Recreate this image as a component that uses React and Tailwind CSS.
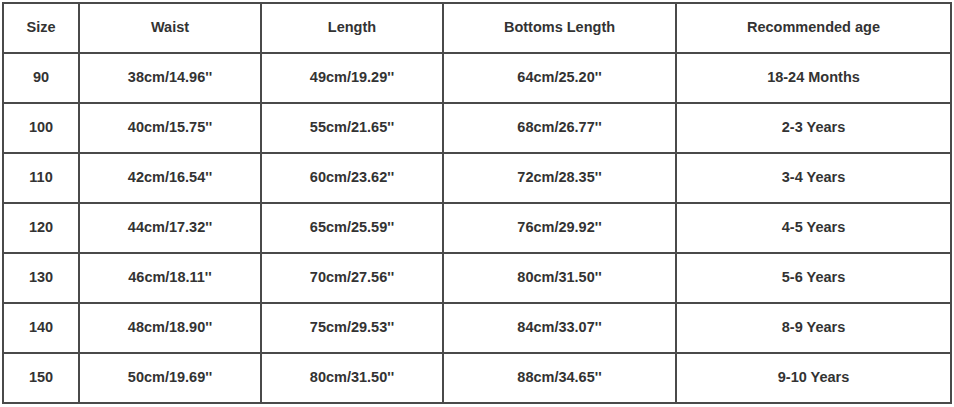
const headers = ["Size", "Waist", "Length", "Bottoms Length", "Recommended age"];

const rows = [
  ["90", "38cm/14.96''", "49cm/19.29''", "64cm/25.20''", "18-24 Months"],
  ["100", "40cm/15.75''", "55cm/21.65''", "68cm/26.77''", "2-3 Years"],
  ["110", "42cm/16.54''", "60cm/23.62''", "72cm/28.35''", "3-4 Years"],
  ["120", "44cm/17.32''", "65cm/25.59''", "76cm/29.92''", "4-5 Years"],
  ["130", "46cm/18.11''", "70cm/27.56''", "80cm/31.50''", "5-6 Years"],
  ["140", "48cm/18.90''", "75cm/29.53''", "84cm/33.07''", "8-9 Years"],
  ["150", "50cm/19.69''", "80cm/31.50''", "88cm/34.65''", "9-10 Years"],
];

function Cell({ children }) {
  return (
    <div className="h-[50px] flex items-center justify-center border-r-2 border-b-2 border-[#4a4a4a]">
      {children}
    </div>
  );
}

export default function App() {
  return (
    <div className="w-[954px] h-[407px] bg-white pt-[2px] pl-[2px]" style={{ fontFamily: '"Liberation Sans", Arial, sans-serif' }}>
      <div className="grid grid-cols-[76px_182px_182px_233px_275px] w-fit border-l-2 border-t-2 border-[#4a4a4a] text-[14.5px] font-bold text-[#333]">
        {headers.map((h) => (
          <Cell key={h}>{h}</Cell>
        ))}
        {rows.map((r) =>
          r.map((v, i) => <Cell key={r[0] + "-" + i}>{v}</Cell>)
        )}
      </div>
    </div>
  );
}
